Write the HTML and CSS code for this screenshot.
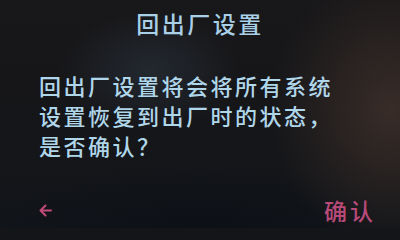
FILE: index.html
```html
<!DOCTYPE html>
<html lang="zh-CN">
<head>
<meta charset="utf-8">
<link rel="stylesheet" href="styles.css">
</head>
<body>
<div class="screen">
  <div class="title">回出厂设置</div>
  <div class="message">回出厂设置将会将所有系统<br>设置恢复到出厂时的状态，<br>是否确认？</div>
  <div class="footer">
    <span class="back">
      <svg width="13" height="13" viewBox="0 0 13 13"><path d="M12 6.5H2M6.5 1.5L1.5 6.5L6.5 11.5" fill="none" stroke="#c04a78" stroke-width="2" stroke-linecap="round" stroke-linejoin="round"/></svg>
    </span>
    <span class="confirm">确认</span>
  </div>
</div>
</body>
</html>
```
FILE: styles.css
```css
html, body {
  margin: 0;
  padding: 0;
  background: #141518;
}
.screen {
  width: 400px;
  height: 228px;
  display: flex;
  flex-direction: column;
  box-sizing: border-box;
  overflow: hidden;
  font-family: "Noto Sans CJK SC", "Noto Sans", sans-serif;
  background:
    radial-gradient(ellipse 90px 60px at 150px 70px, rgba(45,55,66,0.55), rgba(45,55,66,0) 100%),
    radial-gradient(ellipse 120px 140px at 390px 110px, rgba(62,48,42,0.85), rgba(62,48,42,0) 100%),
    radial-gradient(ellipse 200px 60px at 200px 225px, rgba(10,14,20,0.6), rgba(10,14,20,0) 100%),
    linear-gradient(180deg, #181719 0%, #151619 60%, #111419 100%);
}
.title {
  padding-top: 8px;
  font-size: 23px;
  font-weight: 500;
  line-height: 30px;
  letter-spacing: 2.5px;
  text-align: center;
  color: #a9d0e6;
}
.message {
  margin-top: 32px;
  margin-left: 39px;
  white-space: nowrap;
  font-size: 22px;
  font-weight: 500;
  line-height: 30px;
  letter-spacing: 2.5px;
  color: #b0d6ea;
}
.footer {
  margin-top: auto;
  height: 30px;
  padding: 0 24px 3px 39px;
  display: flex;
  align-items: center;
  justify-content: space-between;
}
.back {
  display: flex;
  width: 13px;
  height: 13px;
}
.confirm {
  font-size: 23px;
  font-weight: 500;
  line-height: 30px;
  letter-spacing: 3px;
  color: #b84a7a;
}
```
